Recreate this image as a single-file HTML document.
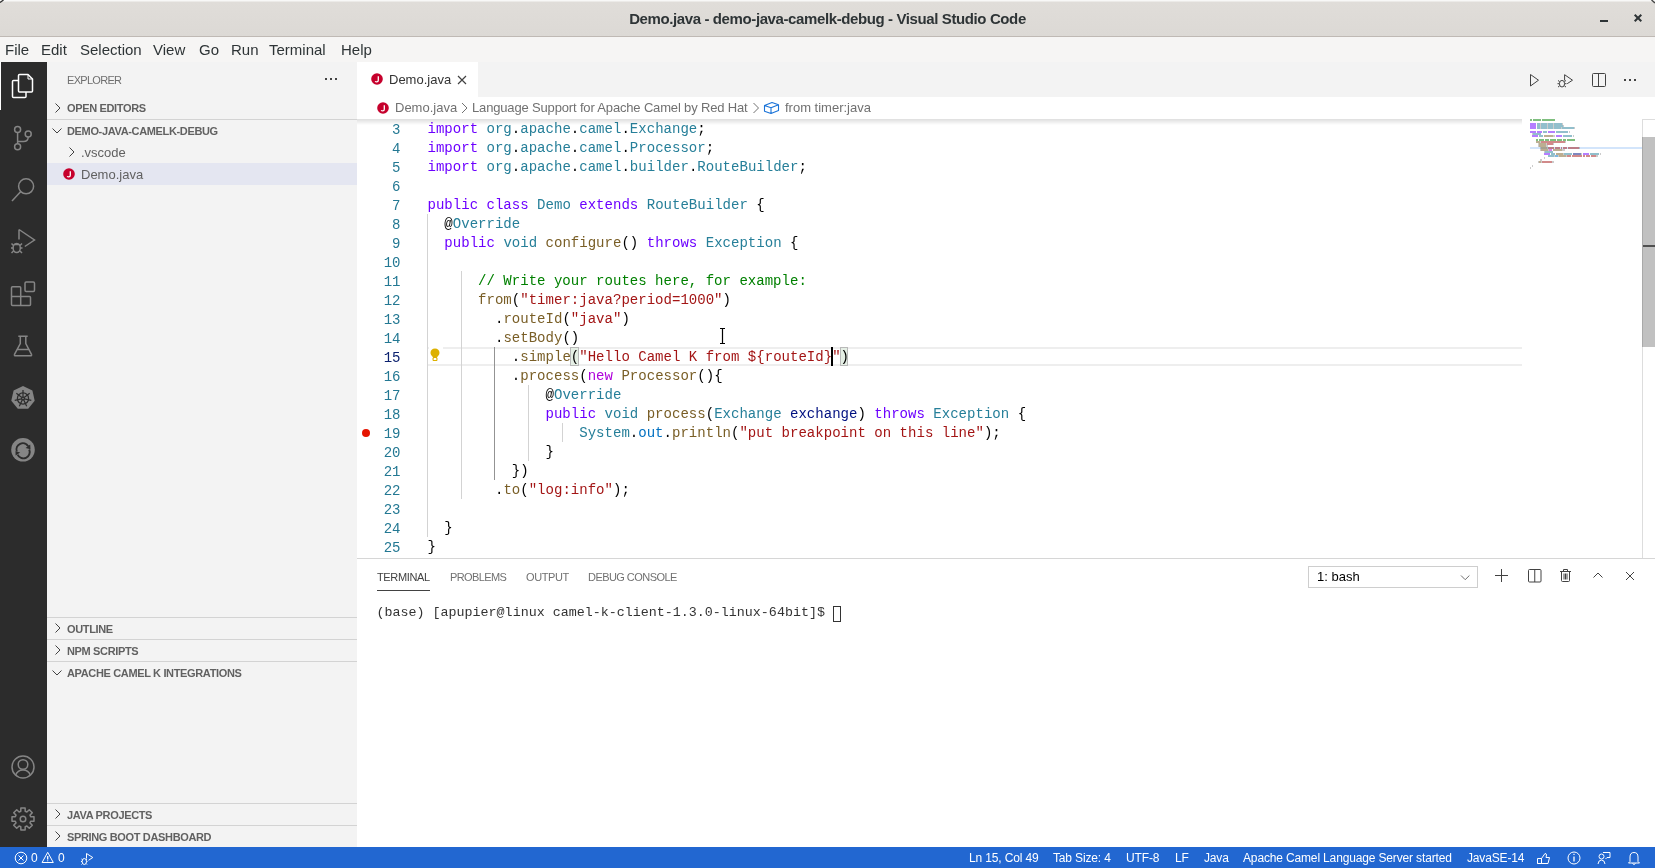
<!DOCTYPE html>
<html><head><meta charset="utf-8">
<style>
*{margin:0;padding:0;box-sizing:border-box}
html,body{width:1655px;height:868px;overflow:hidden;background:#fff;font-family:"Liberation Sans",sans-serif}
.a{position:absolute}
#title,#menu,#side,#tabs,#crumb,#code,#panel,#status{will-change:transform}
svg{position:absolute;overflow:visible}
#title{left:0;top:0;width:1655px;height:37px;background:linear-gradient(#f8f8f7 0,#f8f8f7 1px,#e0ddd9 2px,#dcd9d5 36px);border-bottom:1px solid #bfb9b4}
#title .t{left:0;width:1655px;top:10px;text-align:center;font-weight:bold;font-size:15px;color:#2e3436;letter-spacing:-0.39px}
#menu{left:0;top:37px;width:1655px;height:25px;background:#f6f5f4}
#menu span{position:absolute;top:4px;font-size:15px;color:#2e3436}
#act{left:0;top:62px;width:47px;height:785px;background:#2c2c2c}
#side{left:47px;top:62px;width:310px;height:785px;background:#f3f3f3}
.sh{position:absolute;left:20px;font-size:11px;font-weight:bold;color:#616161;line-height:22px;letter-spacing:-0.35px}
.sep{position:absolute;left:0;width:310px;height:1px;background:#d3d3d3}
.chev{position:absolute}
.row{position:absolute;font-size:13px;color:#616161;line-height:23px}
#tabs{left:357px;top:62px;width:1298px;height:35px;background:#f3f3f3}
#crumb{left:357px;top:97px;width:1298px;height:22px;background:#fff;font-size:13px;color:#717171}
#code{left:357px;top:119px;width:1298px;height:439px;background:#fff;overflow:hidden}
.ln{position:absolute;left:0;margin-top:2px;width:43.5px;text-align:right;font-family:"Liberation Mono",monospace;font-size:14.05px;line-height:19px;color:#237893}
.ln.cur{color:#0b216f}
.cl{position:absolute;left:70.5px;margin-top:1px;white-space:pre;font-family:"Liberation Mono",monospace;font-size:14.05px;line-height:19px;color:#000}
.k{color:#6c00ff}.t{color:#267f99}.f{color:#795e26}.s{color:#a31515}.c{color:#008000}.v{color:#001080}.o{color:#0070c1}.n{color:#af00db}
.ig{position:absolute;width:1px;background:#d3d3d3}
#panel{left:357px;top:558px;width:1298px;height:289px;background:#fff;border-top:1px solid #d6d6d6}
#status{left:0;top:847px;width:1655px;height:21px;background:#2267d1;color:#fff;font-size:12px}
#status span{position:absolute;top:4px;letter-spacing:-0.15px}
.mono{font-family:"Liberation Mono",monospace}
</style></head><body>
<div id="title" class="a"><svg style="left:0;top:0" width="1655" height="6"><path d="M0 2.5L3.5 0" stroke="#333" stroke-width="1.4"/><path d="M1651.5 0L1655 3" stroke="#444" stroke-width="1.4"/></svg><div class="t a">Demo.java - demo-java-camelk-debug - Visual Studio Code</div>
<div class="a" style="left:1600px;top:20px;width:8px;height:2px;background:#2e3436"></div>
<svg style="left:1634px;top:14px" width="8" height="8"><path d="M0.7 0.7L7.3 7.3M7.3 0.7L0.7 7.3" stroke="#2e3436" stroke-width="2"/></svg>
</div>
<div id="menu" class="a">
<span style="left:5px">File</span><span style="left:41px">Edit</span><span style="left:80px">Selection</span><span style="left:153px">View</span><span style="left:199px">Go</span><span style="left:231px">Run</span><span style="left:269px">Terminal</span><span style="left:341px">Help</span>
</div>
<div id="act" class="a">
<div class="a" style="left:0;top:0;width:1px;height:48px;background:#fff"></div>
<svg style="left:0;top:0" width="47" height="785">
<g fill="none" stroke="#fff" stroke-width="1.5" stroke-linejoin="round">
<path d="M18.5 18.5H13.5a1 1 0 0 0-1 1V34.5a1 1 0 0 0 1 1H25a1 1 0 0 0 1-1V30"/>
<path d="M19.5 12.5H28L32.5 17V29a1 1 0 0 1-1 1H19.5a1 1 0 0 1-1-1V13.5a1 1 0 0 1 1-1Z"/>
<path d="M28 12.5V17H32.5" stroke-width="1"/>
</g>
<g fill="none" stroke="#858585" stroke-width="1.5">
<circle cx="17.6" cy="67.4" r="3"/><circle cx="28.2" cy="72" r="3"/><circle cx="17.6" cy="84.7" r="3"/>
<path d="M17.6 70.4V81.7M17.6 79.5H23.5Q28.2 79.5 28.2 75"/>
<circle cx="26.1" cy="124.3" r="7.5"/><path d="M20.8 129.6L12 139"/>
<path d="M19 167.5V177.5M19 167.5L34.5 178L24.8 184.5"/>
<ellipse cx="16.7" cy="186" rx="3.6" ry="4.5"/><path d="M11.5 181.5L13.5 183.5M22 181.5L20 183.5M11 186H13M20.5 186H22.5M11.5 191L13.5 189M22 191L20 189M14.2 182.5H19.2"/>
<path d="M11.5 234.5V225.7a1 1 0 0 1 1-1H19.7a1 1 0 0 1 1 1V234.5H29.5a1 1 0 0 1 1 1V242.5a1 1 0 0 1-1 1H12.5a1 1 0 0 1-1-1Z M11.5 234.5H20.7V243.5"/>
<rect x="25" y="220" width="9.5" height="9.5" rx="1.2"/>
<path d="M18.3 274.3H27.7M20.3 274.3V281.5L14.5 292.3a1 1 0 0 0 .9 1.5H30.6a1 1 0 0 0 .9-1.5L25.8 281.5V274.3M16.8 287.5H29.2"/>
</g>
<polygon points="23,324 32.4,328.5 34.7,338.7 28.2,346.8 17.8,346.8 11.3,338.7 13.6,328.5" fill="#858585"/>
<g fill="none" stroke="#2c2c2c" stroke-width="1.3">
<circle cx="23" cy="336.5" r="5.6"/><circle cx="23" cy="336.5" r="1.4"/>
<path d="M23.00 335.00L23.00 328.00M24.17 335.56L29.65 331.20M24.46 336.83L31.29 338.39M23.65 337.85L26.69 344.16M22.35 337.85L19.31 344.16M21.54 336.83L14.71 338.39M21.83 335.56L16.35 331.20" stroke-width="1.2"/>
</g>
<circle cx="23" cy="387.8" r="11.8" fill="#858585"/>
<g fill="none" stroke="#2c2c2c" stroke-width="1.9">
<path d="M16.8 389.5A6.3 6.3 0 0 1 28.2 384.3"/><path d="M29.2 387.5A6.3 6.3 0 0 1 17.6 392.6"/>
</g>
<path d="M30.2 382.5L30.5 387.2L25.6 386Z M15.6 393.5L15.5 389.2L20.2 390.6Z" fill="#2c2c2c"/>
<g fill="none" stroke="#858585" stroke-width="1.5">
<circle cx="23" cy="705" r="11"/><circle cx="23" cy="702.5" r="4.8"/><path d="M15.5 713.5Q17.5 708 23 708Q28.5 708 30.5 713.5"/>
</g>
<g transform="translate(23 757)" fill="none" stroke="#858585" stroke-width="1.5" stroke-linejoin="round">
<path d="M-2.21 -7.69L-2.14 -10.99L2.14 -10.99L2.21 -7.69L3.88 -7.00L6.26 -9.29L9.29 -6.26L7.00 -3.88L7.69 -2.21L10.99 -2.14L10.99 2.14L7.69 2.21L7.00 3.88L9.29 6.26L6.26 9.29L3.88 7.00L2.21 7.69L2.14 10.99L-2.14 10.99L-2.21 7.69L-3.88 7.00L-6.26 9.29L-9.29 6.26L-7.00 3.88L-7.69 2.21L-10.99 2.14L-10.99 -2.14L-7.69 -2.21L-7.00 -3.88L-9.29 -6.26L-6.26 -9.29L-3.88 -7.00Z"/>
<circle cx="0" cy="0" r="2.8"/>
</g>
</svg>

</div>
<div id="side" class="a">
<div class="a" style="left:20px;top:12px;font-size:11px;color:#6f6f6f;letter-spacing:-0.7px">EXPLORER</div>
<div class="a" style="left:278px;top:16px;width:2px;height:2px;background:#424242;box-shadow:5px 0 #424242,10px 0 #424242"></div>
<svg style="left:7px;top:41px" width="8" height="10"><path d="M1.5 0.5L6 5L1.5 9.5" fill="none" stroke="#424242" stroke-width="1"/></svg>
<div class="sh" style="top:35px">OPEN EDITORS</div>
<div class="sep" style="top:57px"></div>
<svg style="left:5px;top:66px" width="10" height="6"><path d="M0.5 0.5L5 5L9.5 0.5" fill="none" stroke="#424242" stroke-width="1"/></svg>
<div class="sh" style="top:58px">DEMO-JAVA-CAMELK-DEBUG</div>
<svg style="left:21px;top:85px" width="8" height="10"><path d="M1.5 0.5L6 5L1.5 9.5" fill="none" stroke="#424242" stroke-width="1"/></svg>
<div class="row" style="left:34px;top:79px">.vscode</div>
<div class="a" style="left:0;top:101px;width:310px;height:22px;background:#e4e6f1"></div>
<svg style="left:15.6px;top:106.2px" width="12" height="12"><circle cx="6" cy="6" r="5.8" fill="#c6002c"/><path d="M7.3 3.2V7.3Q7.3 8.9 5.7 8.9Q4.6 8.9 4.2 8.2" fill="none" stroke="#fff" stroke-width="1.3"/></svg>
<div class="row" style="left:34px;top:101px">Demo.java</div>
<div class="sep" style="top:555px"></div>
<svg style="left:7px;top:561px" width="8" height="10"><path d="M1.5 0.5L6 5L1.5 9.5" fill="none" stroke="#424242" stroke-width="1"/></svg>
<div class="sh" style="top:556px">OUTLINE</div>
<div class="sep" style="top:577px"></div>
<svg style="left:7px;top:583px" width="8" height="10"><path d="M1.5 0.5L6 5L1.5 9.5" fill="none" stroke="#424242" stroke-width="1"/></svg>
<div class="sh" style="top:578px">NPM SCRIPTS</div>
<div class="sep" style="top:599px"></div>
<svg style="left:5px;top:608px" width="10" height="6"><path d="M0.5 0.5L5 5L9.5 0.5" fill="none" stroke="#424242" stroke-width="1"/></svg>
<div class="sh" style="top:600px">APACHE CAMEL K INTEGRATIONS</div>
<div class="sep" style="top:741px"></div>
<svg style="left:7px;top:747px" width="8" height="10"><path d="M1.5 0.5L6 5L1.5 9.5" fill="none" stroke="#424242" stroke-width="1"/></svg>
<div class="sh" style="top:742px">JAVA PROJECTS</div>
<div class="sep" style="top:763px"></div>
<svg style="left:7px;top:769px" width="8" height="10"><path d="M1.5 0.5L6 5L1.5 9.5" fill="none" stroke="#424242" stroke-width="1"/></svg>
<div class="sh" style="top:764px">SPRING BOOT DASHBOARD</div>

</div>
<div id="tabs" class="a">
<div class="a" style="left:0;top:0;width:121px;height:35px;background:#fff"></div>
<svg style="left:13.8px;top:11px" width="12" height="12"><circle cx="6" cy="6" r="5.8" fill="#c6002c"/><path d="M7.3 3.2V7.3Q7.3 8.9 5.7 8.9Q4.6 8.9 4.2 8.2" fill="none" stroke="#fff" stroke-width="1.3"/></svg>
<div class="a" style="left:32px;top:10px;font-size:13px;color:#333;line-height:16px">Demo.java</div>
<svg style="left:101px;top:14px" width="8" height="8"><path d="M0 0L8 8M8 0L0 8" stroke="#424242" stroke-width="1.2"/></svg>
<svg style="left:0;top:0" width="1298" height="35">
<g fill="none" stroke="#424242" stroke-width="1">
<path d="M1173.5 12.5L1181.5 18.2L1173.5 24Z"/>
<path d="M1207.6 18.5V12.7L1215.5 18.2L1210.2 21.7"/>
<rect x="1235.5" y="11.5" width="13" height="13" rx="1"/><path d="M1241.5 11.5V24.5"/>
</g>
<g fill="none" stroke="#424242" stroke-width="1"><ellipse cx="1205" cy="21.7" rx="2.6" ry="3.3"/><path d="M1201 18.5L1202.5 19.5M1209 18.5L1207.5 19.5M1200.5 21.7H1202.3M1207.7 21.7H1209.5M1201 25L1202.5 24M1209 25L1207.5 24"/></g>
<rect x="1267" y="17" width="2" height="2" fill="#424242"/><rect x="1272" y="17" width="2" height="2" fill="#424242"/><rect x="1277" y="17" width="2" height="2" fill="#424242"/>
</svg>

</div>
<div id="crumb" class="a">
<svg style="left:19.8px;top:5px" width="12" height="12"><circle cx="6" cy="6" r="5.8" fill="#c6002c"/><path d="M7.3 3.2V7.3Q7.3 8.9 5.7 8.9Q4.6 8.9 4.2 8.2" fill="none" stroke="#fff" stroke-width="1.3"/></svg>
<div class="a" style="left:38px;top:3px;line-height:16px">Demo.java</div>
<div class="a" style="left:115px;top:3px;line-height:16px;letter-spacing:-0.16px">Language Support for Apache Camel by Red Hat</div>
<div class="a" style="left:428px;top:3px;line-height:16px">from timer:java</div>
<svg style="left:0;top:0" width="450" height="22"><g fill="none" stroke="#717171" stroke-width="1"><path d="M105 6L110 11L105 16M396.5 6L401.5 11L396.5 16"/></g>
<g fill="none" stroke="#1a73d8" stroke-width="1.1" stroke-linejoin="round"><path d="M407.5 8.5L415 5.5L421.5 7.8V13.5L414 16.5L407.5 14.2Z M407.5 8.5L414 10.8L421.5 7.8 M414 10.8V16.5"/></g></svg>
</div>
<div id="code" class="a">
<div class="a" style="left:70px;top:228px;width:1095px;height:19px;border-top:2px solid #eeeeee;border-bottom:2px solid #eeeeee"></div>
<div class="ig" style="left:70px;top:95px;height:323px;background:#d3d3d3"></div>
<div class="ig" style="left:104px;top:152px;height:228px;background:#d3d3d3"></div>
<div class="ig" style="left:137px;top:228px;height:133px;background:#939393"></div>
<div class="ig" style="left:171px;top:266px;height:76px;background:#d3d3d3"></div>
<div class="ig" style="left:205px;top:304px;height:19px;background:#d3d3d3"></div>
<div class="a" style="left:213.31px;top:228px;width:8.43px;height:19px;background:#e5efe5;border:1px solid #b9b9b9"></div>
<div class="a" style="left:483.07px;top:228px;width:8.43px;height:19px;background:#e5efe5;border:1px solid #b9b9b9"></div>
<div class="ln" style="top:0px">3</div>
<div class="cl" style="top:0px"><span class="k">import</span> <span class="t">org</span>.<span class="t">apache</span>.<span class="t">camel</span>.<span class="t">Exchange</span>;</div>
<div class="ln" style="top:19px">4</div>
<div class="cl" style="top:19px"><span class="k">import</span> <span class="t">org</span>.<span class="t">apache</span>.<span class="t">camel</span>.<span class="t">Processor</span>;</div>
<div class="ln" style="top:38px">5</div>
<div class="cl" style="top:38px"><span class="k">import</span> <span class="t">org</span>.<span class="t">apache</span>.<span class="t">camel</span>.<span class="t">builder</span>.<span class="t">RouteBuilder</span>;</div>
<div class="ln" style="top:57px">6</div>
<div class="cl" style="top:57px"></div>
<div class="ln" style="top:76px">7</div>
<div class="cl" style="top:76px"><span class="k">public</span> <span class="k">class</span> <span class="t">Demo</span> <span class="k">extends</span> <span class="t">RouteBuilder</span> {</div>
<div class="ln" style="top:95px">8</div>
<div class="cl" style="top:95px">  @<span class="t">Override</span></div>
<div class="ln" style="top:114px">9</div>
<div class="cl" style="top:114px">  <span class="k">public</span> <span class="t">void</span> <span class="f">configure</span>() <span class="k">throws</span> <span class="t">Exception</span> {</div>
<div class="ln" style="top:133px">10</div>
<div class="cl" style="top:133px"></div>
<div class="ln" style="top:152px">11</div>
<div class="cl" style="top:152px">      <span class="c">// Write your routes here, for example:</span></div>
<div class="ln" style="top:171px">12</div>
<div class="cl" style="top:171px">      <span class="f">from</span>(<span class="s">&quot;timer:java?period=1000&quot;</span>)</div>
<div class="ln" style="top:190px">13</div>
<div class="cl" style="top:190px">        .<span class="f">routeId</span>(<span class="s">&quot;java&quot;</span>)</div>
<div class="ln" style="top:209px">14</div>
<div class="cl" style="top:209px">        .<span class="f">setBody</span>()</div>
<div class="ln cur" style="top:228px">15</div>
<div class="cl" style="top:228px">          .<span class="f">simple</span>(<span class="s">&quot;Hello Camel K from ${routeId}&quot;</span>)</div>
<div class="ln" style="top:247px">16</div>
<div class="cl" style="top:247px">          .<span class="f">process</span>(<span class="n">new</span> <span class="f">Processor</span>(){</div>
<div class="ln" style="top:266px">17</div>
<div class="cl" style="top:266px">              @<span class="t">Override</span></div>
<div class="ln" style="top:285px">18</div>
<div class="cl" style="top:285px">              <span class="k">public</span> <span class="t">void</span> <span class="f">process</span>(<span class="t">Exchange</span> <span class="v">exchange</span>) <span class="k">throws</span> <span class="t">Exception</span> {</div>
<div class="ln" style="top:304px">19</div>
<div class="cl" style="top:304px">                  <span class="t">System</span>.<span class="o">out</span>.<span class="f">println</span>(<span class="s">&quot;put breakpoint on this line&quot;</span>);</div>
<div class="ln" style="top:323px">20</div>
<div class="cl" style="top:323px">              }</div>
<div class="ln" style="top:342px">21</div>
<div class="cl" style="top:342px">          })</div>
<div class="ln" style="top:361px">22</div>
<div class="cl" style="top:361px">        .<span class="f">to</span>(<span class="s">&quot;log:info&quot;</span>);</div>
<div class="ln" style="top:380px">23</div>
<div class="cl" style="top:380px"></div>
<div class="ln" style="top:399px">24</div>
<div class="cl" style="top:399px">  }</div>
<div class="ln" style="top:418px">25</div>
<div class="cl" style="top:418px">}</div>
<div class="a" style="left:473.64px;top:228px;width:2px;height:19px;background:#000"></div>
<div class="a" style="left:72px;top:228px;width:14px;height:16px;background:#fff"></div>
<svg style="left:73px;top:229px" width="10" height="14"><path d="M5 0.5C2.3 0.5 0.5 2.4 0.5 4.8C0.5 6.6 1.6 7.6 2.4 8.6C2.8 9.1 3 9.6 3 10.2V11.5H7V10.2C7 9.6 7.2 9.1 7.6 8.6C8.4 7.6 9.5 6.6 9.5 4.8C9.5 2.4 7.7 0.5 5 0.5Z" fill="#ddb100"/><rect x="3.5" y="10" width="3" height="2.5" fill="#fff"/><path d="M3 10V12.5H7V10" fill="none" stroke="#ddb100" stroke-width="1"/></svg>
<div class="a" style="left:5px;top:310px;width:8px;height:8px;border-radius:4px;background:#e51400"></div>
<svg style="left:362px;top:208px" width="8" height="18"><path d="M1 1.5H6M3.5 1.5V16.5M1 16.5H6" fill="none" stroke="#fff" stroke-width="3"/><path d="M1 1.5H6M3.5 1.5V16.5M1 16.5H6" fill="none" stroke="#000" stroke-width="1.2"/></svg>
<div class="a" style="left:1173px;top:28px;width:112px;height:2px;background:#d3e5fb"></div>
<div class="a" style="left:1173px;top:0px;width:2px;height:2px;background:#008000;opacity:.5"></div>
<div class="a" style="left:1176px;top:0px;width:8px;height:2px;background:#008000;opacity:.5"></div>
<div class="a" style="left:1185px;top:0px;width:13px;height:2px;background:#008000;opacity:.5"></div>
<div class="a" style="left:1173px;top:4px;width:6px;height:2px;background:#6c00ff;opacity:.5"></div>
<div class="a" style="left:1180px;top:4px;width:3px;height:2px;background:#267f99;opacity:.5"></div>
<div class="a" style="left:1183px;top:4px;width:1px;height:2px;background:#000000;opacity:.2"></div>
<div class="a" style="left:1184px;top:4px;width:6px;height:2px;background:#267f99;opacity:.5"></div>
<div class="a" style="left:1190px;top:4px;width:1px;height:2px;background:#000000;opacity:.2"></div>
<div class="a" style="left:1191px;top:4px;width:5px;height:2px;background:#267f99;opacity:.5"></div>
<div class="a" style="left:1196px;top:4px;width:1px;height:2px;background:#000000;opacity:.2"></div>
<div class="a" style="left:1197px;top:4px;width:8px;height:2px;background:#267f99;opacity:.5"></div>
<div class="a" style="left:1205px;top:4px;width:1px;height:2px;background:#000000;opacity:.2"></div>
<div class="a" style="left:1173px;top:6px;width:6px;height:2px;background:#6c00ff;opacity:.5"></div>
<div class="a" style="left:1180px;top:6px;width:3px;height:2px;background:#267f99;opacity:.5"></div>
<div class="a" style="left:1183px;top:6px;width:1px;height:2px;background:#000000;opacity:.2"></div>
<div class="a" style="left:1184px;top:6px;width:6px;height:2px;background:#267f99;opacity:.5"></div>
<div class="a" style="left:1190px;top:6px;width:1px;height:2px;background:#000000;opacity:.2"></div>
<div class="a" style="left:1191px;top:6px;width:5px;height:2px;background:#267f99;opacity:.5"></div>
<div class="a" style="left:1196px;top:6px;width:1px;height:2px;background:#000000;opacity:.2"></div>
<div class="a" style="left:1197px;top:6px;width:9px;height:2px;background:#267f99;opacity:.5"></div>
<div class="a" style="left:1206px;top:6px;width:1px;height:2px;background:#000000;opacity:.2"></div>
<div class="a" style="left:1173px;top:8px;width:6px;height:2px;background:#6c00ff;opacity:.5"></div>
<div class="a" style="left:1180px;top:8px;width:3px;height:2px;background:#267f99;opacity:.5"></div>
<div class="a" style="left:1183px;top:8px;width:1px;height:2px;background:#000000;opacity:.2"></div>
<div class="a" style="left:1184px;top:8px;width:6px;height:2px;background:#267f99;opacity:.5"></div>
<div class="a" style="left:1190px;top:8px;width:1px;height:2px;background:#000000;opacity:.2"></div>
<div class="a" style="left:1191px;top:8px;width:5px;height:2px;background:#267f99;opacity:.5"></div>
<div class="a" style="left:1196px;top:8px;width:1px;height:2px;background:#000000;opacity:.2"></div>
<div class="a" style="left:1197px;top:8px;width:7px;height:2px;background:#267f99;opacity:.5"></div>
<div class="a" style="left:1204px;top:8px;width:1px;height:2px;background:#000000;opacity:.2"></div>
<div class="a" style="left:1205px;top:8px;width:12px;height:2px;background:#267f99;opacity:.5"></div>
<div class="a" style="left:1217px;top:8px;width:1px;height:2px;background:#000000;opacity:.2"></div>
<div class="a" style="left:1173px;top:12px;width:6px;height:2px;background:#6c00ff;opacity:.5"></div>
<div class="a" style="left:1180px;top:12px;width:5px;height:2px;background:#6c00ff;opacity:.5"></div>
<div class="a" style="left:1186px;top:12px;width:4px;height:2px;background:#267f99;opacity:.5"></div>
<div class="a" style="left:1191px;top:12px;width:7px;height:2px;background:#6c00ff;opacity:.5"></div>
<div class="a" style="left:1199px;top:12px;width:12px;height:2px;background:#267f99;opacity:.5"></div>
<div class="a" style="left:1212px;top:12px;width:1px;height:2px;background:#000000;opacity:.2"></div>
<div class="a" style="left:1175px;top:14px;width:1px;height:2px;background:#000000;opacity:.2"></div>
<div class="a" style="left:1176px;top:14px;width:8px;height:2px;background:#267f99;opacity:.5"></div>
<div class="a" style="left:1175px;top:16px;width:6px;height:2px;background:#6c00ff;opacity:.5"></div>
<div class="a" style="left:1182px;top:16px;width:4px;height:2px;background:#267f99;opacity:.5"></div>
<div class="a" style="left:1187px;top:16px;width:9px;height:2px;background:#795e26;opacity:.5"></div>
<div class="a" style="left:1196px;top:16px;width:2px;height:2px;background:#000000;opacity:.2"></div>
<div class="a" style="left:1199px;top:16px;width:6px;height:2px;background:#6c00ff;opacity:.5"></div>
<div class="a" style="left:1206px;top:16px;width:9px;height:2px;background:#267f99;opacity:.5"></div>
<div class="a" style="left:1216px;top:16px;width:1px;height:2px;background:#000000;opacity:.2"></div>
<div class="a" style="left:1179px;top:20px;width:2px;height:2px;background:#008000;opacity:.5"></div>
<div class="a" style="left:1182px;top:20px;width:5px;height:2px;background:#008000;opacity:.5"></div>
<div class="a" style="left:1188px;top:20px;width:4px;height:2px;background:#008000;opacity:.5"></div>
<div class="a" style="left:1193px;top:20px;width:6px;height:2px;background:#008000;opacity:.5"></div>
<div class="a" style="left:1200px;top:20px;width:5px;height:2px;background:#008000;opacity:.5"></div>
<div class="a" style="left:1206px;top:20px;width:3px;height:2px;background:#008000;opacity:.5"></div>
<div class="a" style="left:1210px;top:20px;width:8px;height:2px;background:#008000;opacity:.5"></div>
<div class="a" style="left:1179px;top:22px;width:4px;height:2px;background:#795e26;opacity:.5"></div>
<div class="a" style="left:1183px;top:22px;width:1px;height:2px;background:#000000;opacity:.2"></div>
<div class="a" style="left:1184px;top:22px;width:24px;height:2px;background:#a31515;opacity:.5"></div>
<div class="a" style="left:1208px;top:22px;width:1px;height:2px;background:#000000;opacity:.2"></div>
<div class="a" style="left:1181px;top:24px;width:1px;height:2px;background:#000000;opacity:.2"></div>
<div class="a" style="left:1182px;top:24px;width:7px;height:2px;background:#795e26;opacity:.5"></div>
<div class="a" style="left:1189px;top:24px;width:1px;height:2px;background:#000000;opacity:.2"></div>
<div class="a" style="left:1190px;top:24px;width:6px;height:2px;background:#a31515;opacity:.5"></div>
<div class="a" style="left:1196px;top:24px;width:1px;height:2px;background:#000000;opacity:.2"></div>
<div class="a" style="left:1181px;top:26px;width:1px;height:2px;background:#000000;opacity:.2"></div>
<div class="a" style="left:1182px;top:26px;width:7px;height:2px;background:#795e26;opacity:.5"></div>
<div class="a" style="left:1189px;top:26px;width:2px;height:2px;background:#000000;opacity:.2"></div>
<div class="a" style="left:1183px;top:28px;width:1px;height:2px;background:#000000;opacity:.2"></div>
<div class="a" style="left:1184px;top:28px;width:6px;height:2px;background:#795e26;opacity:.5"></div>
<div class="a" style="left:1190px;top:28px;width:1px;height:2px;background:#000000;opacity:.2"></div>
<div class="a" style="left:1191px;top:28px;width:6px;height:2px;background:#a31515;opacity:.5"></div>
<div class="a" style="left:1198px;top:28px;width:5px;height:2px;background:#a31515;opacity:.5"></div>
<div class="a" style="left:1204px;top:28px;width:1px;height:2px;background:#a31515;opacity:.5"></div>
<div class="a" style="left:1206px;top:28px;width:4px;height:2px;background:#a31515;opacity:.5"></div>
<div class="a" style="left:1211px;top:28px;width:11px;height:2px;background:#a31515;opacity:.5"></div>
<div class="a" style="left:1222px;top:28px;width:1px;height:2px;background:#000000;opacity:.2"></div>
<div class="a" style="left:1183px;top:30px;width:1px;height:2px;background:#000000;opacity:.2"></div>
<div class="a" style="left:1184px;top:30px;width:7px;height:2px;background:#795e26;opacity:.5"></div>
<div class="a" style="left:1191px;top:30px;width:1px;height:2px;background:#000000;opacity:.2"></div>
<div class="a" style="left:1192px;top:30px;width:3px;height:2px;background:#af00db;opacity:.5"></div>
<div class="a" style="left:1196px;top:30px;width:9px;height:2px;background:#795e26;opacity:.5"></div>
<div class="a" style="left:1205px;top:30px;width:3px;height:2px;background:#000000;opacity:.2"></div>
<div class="a" style="left:1187px;top:32px;width:1px;height:2px;background:#000000;opacity:.2"></div>
<div class="a" style="left:1188px;top:32px;width:8px;height:2px;background:#267f99;opacity:.5"></div>
<div class="a" style="left:1187px;top:34px;width:6px;height:2px;background:#6c00ff;opacity:.5"></div>
<div class="a" style="left:1194px;top:34px;width:4px;height:2px;background:#267f99;opacity:.5"></div>
<div class="a" style="left:1199px;top:34px;width:7px;height:2px;background:#795e26;opacity:.5"></div>
<div class="a" style="left:1206px;top:34px;width:1px;height:2px;background:#000000;opacity:.2"></div>
<div class="a" style="left:1207px;top:34px;width:8px;height:2px;background:#267f99;opacity:.5"></div>
<div class="a" style="left:1216px;top:34px;width:8px;height:2px;background:#001080;opacity:.5"></div>
<div class="a" style="left:1224px;top:34px;width:1px;height:2px;background:#000000;opacity:.2"></div>
<div class="a" style="left:1226px;top:34px;width:6px;height:2px;background:#6c00ff;opacity:.5"></div>
<div class="a" style="left:1233px;top:34px;width:9px;height:2px;background:#267f99;opacity:.5"></div>
<div class="a" style="left:1243px;top:34px;width:1px;height:2px;background:#000000;opacity:.2"></div>
<div class="a" style="left:1191px;top:36px;width:6px;height:2px;background:#267f99;opacity:.5"></div>
<div class="a" style="left:1197px;top:36px;width:1px;height:2px;background:#000000;opacity:.2"></div>
<div class="a" style="left:1198px;top:36px;width:3px;height:2px;background:#0070c1;opacity:.5"></div>
<div class="a" style="left:1201px;top:36px;width:1px;height:2px;background:#000000;opacity:.2"></div>
<div class="a" style="left:1202px;top:36px;width:7px;height:2px;background:#795e26;opacity:.5"></div>
<div class="a" style="left:1209px;top:36px;width:1px;height:2px;background:#000000;opacity:.2"></div>
<div class="a" style="left:1210px;top:36px;width:4px;height:2px;background:#a31515;opacity:.5"></div>
<div class="a" style="left:1215px;top:36px;width:10px;height:2px;background:#a31515;opacity:.5"></div>
<div class="a" style="left:1226px;top:36px;width:2px;height:2px;background:#a31515;opacity:.5"></div>
<div class="a" style="left:1229px;top:36px;width:4px;height:2px;background:#a31515;opacity:.5"></div>
<div class="a" style="left:1234px;top:36px;width:5px;height:2px;background:#a31515;opacity:.5"></div>
<div class="a" style="left:1239px;top:36px;width:2px;height:2px;background:#000000;opacity:.2"></div>
<div class="a" style="left:1187px;top:38px;width:1px;height:2px;background:#000000;opacity:.2"></div>
<div class="a" style="left:1183px;top:40px;width:2px;height:2px;background:#000000;opacity:.2"></div>
<div class="a" style="left:1181px;top:42px;width:1px;height:2px;background:#000000;opacity:.2"></div>
<div class="a" style="left:1182px;top:42px;width:2px;height:2px;background:#795e26;opacity:.5"></div>
<div class="a" style="left:1184px;top:42px;width:1px;height:2px;background:#000000;opacity:.2"></div>
<div class="a" style="left:1185px;top:42px;width:10px;height:2px;background:#a31515;opacity:.5"></div>
<div class="a" style="left:1195px;top:42px;width:2px;height:2px;background:#000000;opacity:.2"></div>
<div class="a" style="left:1175px;top:46px;width:1px;height:2px;background:#000000;opacity:.2"></div>
<div class="a" style="left:1173px;top:48px;width:1px;height:2px;background:#000000;opacity:.2"></div>
<div class="a" style="left:1285px;top:0;width:1px;height:439px;background:#dddddd"></div>
<div class="a" style="left:1285px;top:18px;width:13px;height:210px;background:#c1c1c1;border-left:1px solid #a9a9a9"></div>
<div class="a" style="left:1286px;top:126px;width:12px;height:2px;background:#505050"></div>
<div class="a" style="left:1285px;top:0;width:13px;height:1px;background:#dddddd"></div>
<div class="a" style="left:0;top:0;width:1165px;height:6px;background:linear-gradient(rgba(0,0,0,.13),rgba(0,0,0,0))"></div>
</div>
<div id="panel" class="a">
<div class="a" style="left:20px;top:11px;font-size:11px;color:#424242;line-height:14px;letter-spacing:-0.35px">TERMINAL</div>
<div class="a" style="left:20px;top:31px;width:53px;height:1px;background:#424242"></div>
<div class="a" style="left:93px;top:11px;font-size:11px;color:#717171;line-height:14px;letter-spacing:-0.6px">PROBLEMS</div>
<div class="a" style="left:169px;top:11px;font-size:11px;color:#717171;line-height:14px;letter-spacing:-0.4px">OUTPUT</div>
<div class="a" style="left:231px;top:11px;font-size:11px;color:#717171;line-height:14px;letter-spacing:-0.55px">DEBUG CONSOLE</div>
<div class="a" style="left:951px;top:7px;width:170px;height:22px;border:1px solid #cecece;background:#fff"></div>
<div class="a" style="left:960px;top:10px;font-size:13px;color:#000;line-height:16px">1: bash</div>
<svg style="left:0;top:-2px" width="1298" height="40"><g fill="none" stroke="#424242" stroke-width="1">
<path d="M1104 18.5L1108.2 22.7L1112.4 18.5" stroke="#6f6f6f"/>
<path d="M1144.5 12V25M1138 18.5H1151"/>
<rect x="1171.5" y="12.5" width="12.5" height="12.5" rx="1"/><path d="M1177.75 12.5V25"/>
<path d="M1203 14.5H1214M1206.5 14.5V12.5H1210.5V14.5M1204.5 14.5V23.5a1 1 0 0 0 1 1H1211.5a1 1 0 0 0 1-1V14.5M1207 16.5V22.5M1208.5 16.5V22.5M1210 16.5V22.5"/>
<path d="M1236.5 20.5L1241 16L1245.5 20.5"/>
<path d="M1269 15L1277 23M1277 15L1269 23"/>
</g></svg>
<div class="a mono" style="left:19.5px;top:45px;font-size:13.35px;line-height:17px;color:#333;white-space:pre">(base) [apupier@linux camel-k-client-1.3.0-linux-64bit]$ </div>
<div class="a" style="left:476px;top:47px;width:8px;height:16px;border:1px solid #333"></div>

</div>
<div id="status" class="a">
<svg style="left:0;top:0" width="1655" height="21"><g fill="none" stroke="#fff" stroke-width="1">
<circle cx="21" cy="11" r="5.8"/><path d="M18.5 8.5L23.5 13.5M23.5 8.5L18.5 13.5"/>
<path d="M47.7 5.3L53.3 15.5H42.1Z"/><path d="M47.7 9V12.5" stroke-width="1.3"/><rect x="47.2" y="13.3" width="1" height="1" fill="#fff" stroke="none"/>
<path d="M86.5 11.5V6.5L92.8 10.5L88.5 13.3"/><ellipse cx="84.3" cy="14.5" rx="2.2" ry="3"/><path d="M81.5 12L82.5 12.8M87 12L86 12.8M81 14.5H82M86.5 14.5H87.5M81.5 17.5L82.5 16.5M87 17.5L86 16.5"/>
<path d="M1537.5 16.5H1541.5V11.5L1545 6.5Q1546.5 6.5 1546.5 8L1546 10.5H1549.5L1548 16.5H1541.5M1537.5 11.5H1541.5V16.5H1537.5Z"/>
<circle cx="1574" cy="11" r="6"/><path d="M1574 9.5V14.5" stroke-width="1.3"/><rect x="1573.4" y="6.8" width="1.2" height="1.2" fill="#fff" stroke="none"/>
<circle cx="1601.5" cy="9.5" r="2.5"/><path d="M1598 17Q1598.5 13 1601.5 13Q1604.5 13 1605 17M1603 5.5H1610V10.5H1607L1605.5 12"/>
<path d="M1634 5.5Q1630 5.5 1630 10V14.5L1628.5 16H1639.5L1638 14.5V10Q1638 5.5 1634 5.5ZM1632.5 16.5Q1634 18.5 1635.5 16.5"/>
</g></svg>
<span style="left:31px">0</span><span style="left:58px">0</span>
<span style="left:969px">Ln 15, Col 49</span>
<span style="left:1053px">Tab Size: 4</span>
<span style="left:1126px">UTF-8</span>
<span style="left:1175px">LF</span>
<span style="left:1204px">Java</span>
<span style="left:1243px">Apache Camel Language Server started</span>
<span style="left:1467px">JavaSE-14</span>

</div>
</body></html>
